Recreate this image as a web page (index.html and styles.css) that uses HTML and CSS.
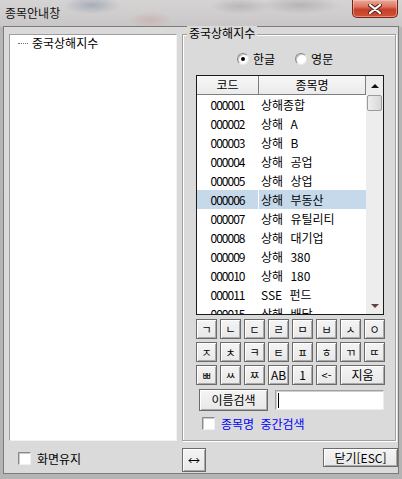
FILE: index.html
```html
<!DOCTYPE html>
<html lang="ko">
<head>
<meta charset="utf-8">
<title>종목안내창</title>
<link rel="stylesheet" href="styles.css">
</head>
<body>
<div class="window">
  <div class="titlebar">
    <span class="title">종목안내창</span>
    <div class="close">
      <svg width="14" height="10" viewBox="0 0 14 10">
        <path d="M2 1 L12 9 M12 1 L2 9" stroke="#5b2a22" stroke-width="4.2" stroke-linecap="round" fill="none"/>
        <path d="M2 1 L12 9 M12 1 L2 9" stroke="#fff" stroke-width="2.2" stroke-linecap="round" fill="none"/>
      </svg>
    </div>
  </div>
  <div class="client">
    <div class="main">
      <div class="tree">
        <div class="node"><span class="dots"></span><span>중국상해지수</span></div>
      </div>
      <div class="group">
        <span class="caption">중국상해지수</span>
        <div class="radios">
          <span class="radio checked"></span><span class="rlabel">한글</span>
          <span class="radio"></span><span class="rlabel">영문</span>
        </div>
        <div class="lv">
          <div class="lv-body">
            <div class="lv-head"><span class="hcode">코드</span><span class="hname">종목명</span></div>
            <div class="row"><span class="code">000001</span><span class="name">상해종합</span></div>
            <div class="row"><span class="code">000002</span><span class="name">상해 A</span></div>
            <div class="row"><span class="code">000003</span><span class="name">상해 B</span></div>
            <div class="row"><span class="code">000004</span><span class="name">상해 공업</span></div>
            <div class="row"><span class="code">000005</span><span class="name">상해 상업</span></div>
            <div class="row sel"><span class="code">000006</span><span class="name">상해 부동산</span></div>
            <div class="row"><span class="code">000007</span><span class="name">상해 유틸리티</span></div>
            <div class="row"><span class="code">000008</span><span class="name">상해 대기업</span></div>
            <div class="row"><span class="code">000009</span><span class="name">상해 380</span></div>
            <div class="row"><span class="code">000010</span><span class="name">상해 180</span></div>
            <div class="row"><span class="code">000011</span><span class="name">SSE 펀드</span></div>
            <div class="row"><span class="code">000015</span><span class="name">상해 배당</span></div>
          </div>
          <div class="scroll">
            <span class="up"></span>
            <span class="thumb"></span>
            <span class="down"></span>
          </div>
        </div>
        <div class="keys">
          <span class="key">ㄱ</span><span class="key">ㄴ</span><span class="key">ㄷ</span><span class="key">ㄹ</span>
          <span class="key">ㅁ</span><span class="key">ㅂ</span><span class="key">ㅅ</span><span class="key">ㅇ</span>
          <span class="key">ㅈ</span><span class="key">ㅊ</span><span class="key">ㅋ</span><span class="key">ㅌ</span>
          <span class="key">ㅍ</span><span class="key">ㅎ</span><span class="key">ㄲ</span><span class="key">ㄸ</span>
          <span class="key">ㅃ</span><span class="key">ㅆ</span><span class="key">ㅉ</span><span class="key big">AB</span>
          <span class="key big">1</span><span class="key">&lt;-</span><span class="key wide">지움</span>
        </div>
        <div class="search">
          <span class="btn namebtn">이름검색</span>
          <div class="input"><span class="caret"></span></div>
        </div>
        <div class="mid">
          <span class="check"></span><span class="mid-label">종목명 중간검색</span>
        </div>
      </div>
    </div>
    <div class="bottom">
      <div class="keep"><span class="check"></span><span class="keep-label">화면유지</span></div>
      <span class="btn swap">
        <svg width="12" height="7" viewBox="0 0 12 7">
          <path d="M1 3.5 H11 M3.5 1 L1 3.5 L3.5 6 M8.5 1 L11 3.5 L8.5 6" stroke="#000" stroke-width="1" fill="none"/>
        </svg>
      </span>
      <span class="btn esc">닫기[ESC]</span>
    </div>
  </div>
</div>
</body>
</html>
```
FILE: styles.css
```css
* { box-sizing: border-box; }
html, body { margin: 0; padding: 0; }
body {
  width: 402px;
  height: 479px;
  overflow: hidden;
  font-family: "Noto Sans CJK KR", "Noto Sans", sans-serif;
  font-size: 12px;
  color: #000;
  background:
    radial-gradient(ellipse 28px 9px at 92px 5px, rgba(80,105,140,0.35), transparent),
    radial-gradient(ellipse 22px 8px at 150px 20px, rgba(200,90,80,0.18), transparent),
    radial-gradient(ellipse 30px 8px at 240px 6px, rgba(90,90,100,0.22), transparent),
    radial-gradient(ellipse 40px 9px at 300px 5px, rgba(80,80,80,0.22), transparent),
    linear-gradient(#d6d3d3, #c9c7c7 26px, #b6b6b6 28px, #b4b4b4);
}
.window {
  display: flex;
  flex-direction: column;
  height: 479px;
}
.titlebar {
  height: 26px;
  display: flex;
  align-items: flex-start;
  flex: none;
}
.title {
  padding-left: 5px;
  line-height: 26px;
  color: #111;
}
.close {
  margin-left: auto;
  margin-right: 4px;
  width: 46px;
  height: 18px;
  border: 1px solid #7a2418;
  border-top: none;
  border-radius: 0 0 5px 5px;
  background: linear-gradient(#eba999, #dc7560 40%, #c8402a 55%, #cf5237);
  box-shadow: inset 0 0 0 1px rgba(255, 215, 205, 0.45);
  display: flex;
  align-items: center;
  justify-content: center;
}
.client {
  margin-left: 3px;
  width: 396px;
  height: 448px;
  border: 1px solid #7b7b7b;
  background: #dadada;
  display: flex;
  flex-direction: column;
  flex: none;
}
.main {
  display: flex;
  padding: 7px 0 0 5px;
}
.tree {
  width: 168px;
  height: 407px;
  background: #fff;
  border: 1px solid;
  border-color: #9d9d9d #f2f2f2 #f2f2f2 #9d9d9d;
  padding-left: 8px;
}
.node {
  display: flex;
  align-items: center;
  height: 16px;
  line-height: 16px;
}
.dots {
  width: 10px;
  height: 0;
  border-top: 1px dotted #6f6f6f;
  margin-right: 4px;
}
.group {
  position: relative;
  margin-left: 5px;
  width: 214px;
  height: 407px;
  border: 1px solid #a0a0a0;
  box-shadow: inset 1px 1px 0 #fff, 1px 1px 0 #fff;
  display: flex;
  flex-direction: column;
  align-items: flex-start;
}
.caption {
  position: absolute;
  left: 4px;
  top: -9px;
  padding: 0 2px;
  line-height: 14px;
  background: #dadada;
}
.radios {
  display: flex;
  align-items: center;
  height: 14px;
  margin: 17px 0 0 54px;
}
.radio {
  width: 12px;
  height: 12px;
  border-radius: 50%;
  background: #fff;
  border: 1px solid;
  border-color: #8a8a8a #e6e6e6 #e6e6e6 #8a8a8a;
  box-shadow: inset 1px 1px 0 #c4c4c4;
  display: flex;
  align-items: center;
  justify-content: center;
}
.radio.checked::after {
  content: "";
  width: 4px;
  height: 4px;
  border-radius: 50%;
  background: #000;
}
.rlabel {
  margin-left: 4px;
  line-height: 14px;
}
.rlabel + .radio { margin-left: 20px; }
.lv {
  margin: 9px 0 0 13px;
  width: 188px;
  height: 240px;
  border: 1px solid #1a1a1a;
  display: flex;
  background: #fff;
  overflow: hidden;
  flex: none;
}
.lv-body {
  width: 169px;
  display: flex;
  flex-direction: column;
  flex: none;
}
.lv-head {
  display: flex;
  height: 19px;
  flex: none;
  background: linear-gradient(#f7f7f7, #ebebeb);
  border-bottom: 1px solid #7e7e7e;
  border-right: 1px solid #7e7e7e;
}
.lv-head span {
  line-height: 18px;
  text-align: center;
}
.hcode {
  width: 62px;
  border-right: 1px solid #7e7e7e;
}
.hname { flex: 1; }
.row {
  display: flex;
  height: 19px;
  flex: none;
  column-gap: 1px;
}
.row span { line-height: 19px; white-space: pre; }
.code {
  width: 61px;
  text-align: center;
  letter-spacing: -1px;
}
.name {
  flex: 1;
  padding-left: 2px;
  word-spacing: 4px;
}
.row.sel span { background: #c5d9eb; }
.scroll {
  width: 17px;
  background: #ededed;
  display: flex;
  flex-direction: column;
  align-items: center;
  flex: none;
}
.up {
  margin-top: 8px;
  width: 0;
  height: 0;
  border-left: 4px solid transparent;
  border-right: 4px solid transparent;
  border-bottom: 4px solid #111;
}
.thumb {
  margin-top: 7px;
  width: 15px;
  height: 16px;
  border: 1px solid #9b9b9b;
  border-radius: 2px;
  background: linear-gradient(90deg, #eeeeee, #d8d8d8);
}
.down {
  margin-top: auto;
  margin-bottom: 6px;
  width: 0;
  height: 0;
  border-left: 4px solid transparent;
  border-right: 4px solid transparent;
  border-top: 4px solid #6b3d3d;
}
.keys {
  margin: 4px 0 0 13px;
  display: grid;
  grid-template-columns: repeat(8, 21px);
  grid-auto-rows: 20px;
  gap: 3px;
}
.key, .btn {
  border: 1px solid #6b6b6b;
  background: linear-gradient(#f4f4f4, #e8e8e8);
  box-shadow: inset 1px 1px 0 #fff, inset -1px -1px 0 #a9a9a9;
  display: flex;
  align-items: center;
  justify-content: center;
}
.key {
  font-size: 11px;
  line-height: 1;
}
.key.big { font-size: 12px; }
.key.wide {
  grid-column: span 2;
  font-size: 12px;
}
.search {
  display: flex;
  align-items: flex-start;
  margin: 4px 0 0 16px;
}
.namebtn {
  width: 69px;
  height: 22px;
  line-height: 1;
}
.input {
  margin: 1px 0 0 7px;
  width: 109px;
  height: 20px;
  background: #fff;
  border: 1px solid;
  border-color: #a0a0a0 #ececec #ececec #a0a0a0;
  box-shadow: inset 1px 1px 0 #d0d0d0;
  padding: 2px 0 0 2px;
}
.caret {
  display: block;
  width: 1px;
  height: 15px;
  background: #000;
}
.mid {
  display: flex;
  align-items: center;
  height: 13px;
  margin: 6px 0 0 19px;
}
.check {
  width: 13px;
  height: 13px;
  flex: none;
  background: #fff;
  border: 1px solid;
  border-color: #8a8a8a #f0f0f0 #f0f0f0 #8a8a8a;
  box-shadow: inset 1px 1px 0 #c8c8c8;
}
.mid-label {
  margin-left: 6px;
  color: #0000ff;
  line-height: 13px;
  word-spacing: 3px;
}
.bottom {
  display: flex;
  align-items: flex-start;
  margin-top: 7px;
  padding-left: 14px;
}
.keep {
  width: 164px;
  display: flex;
  align-items: center;
  margin-top: 4px;
}
.keep-label {
  margin-left: 6px;
  line-height: 13px;
}
.swap {
  width: 24px;
  height: 24px;
}
.esc {
  margin-left: auto;
  width: 75px;
  height: 19px;
  line-height: 1;
}
```
